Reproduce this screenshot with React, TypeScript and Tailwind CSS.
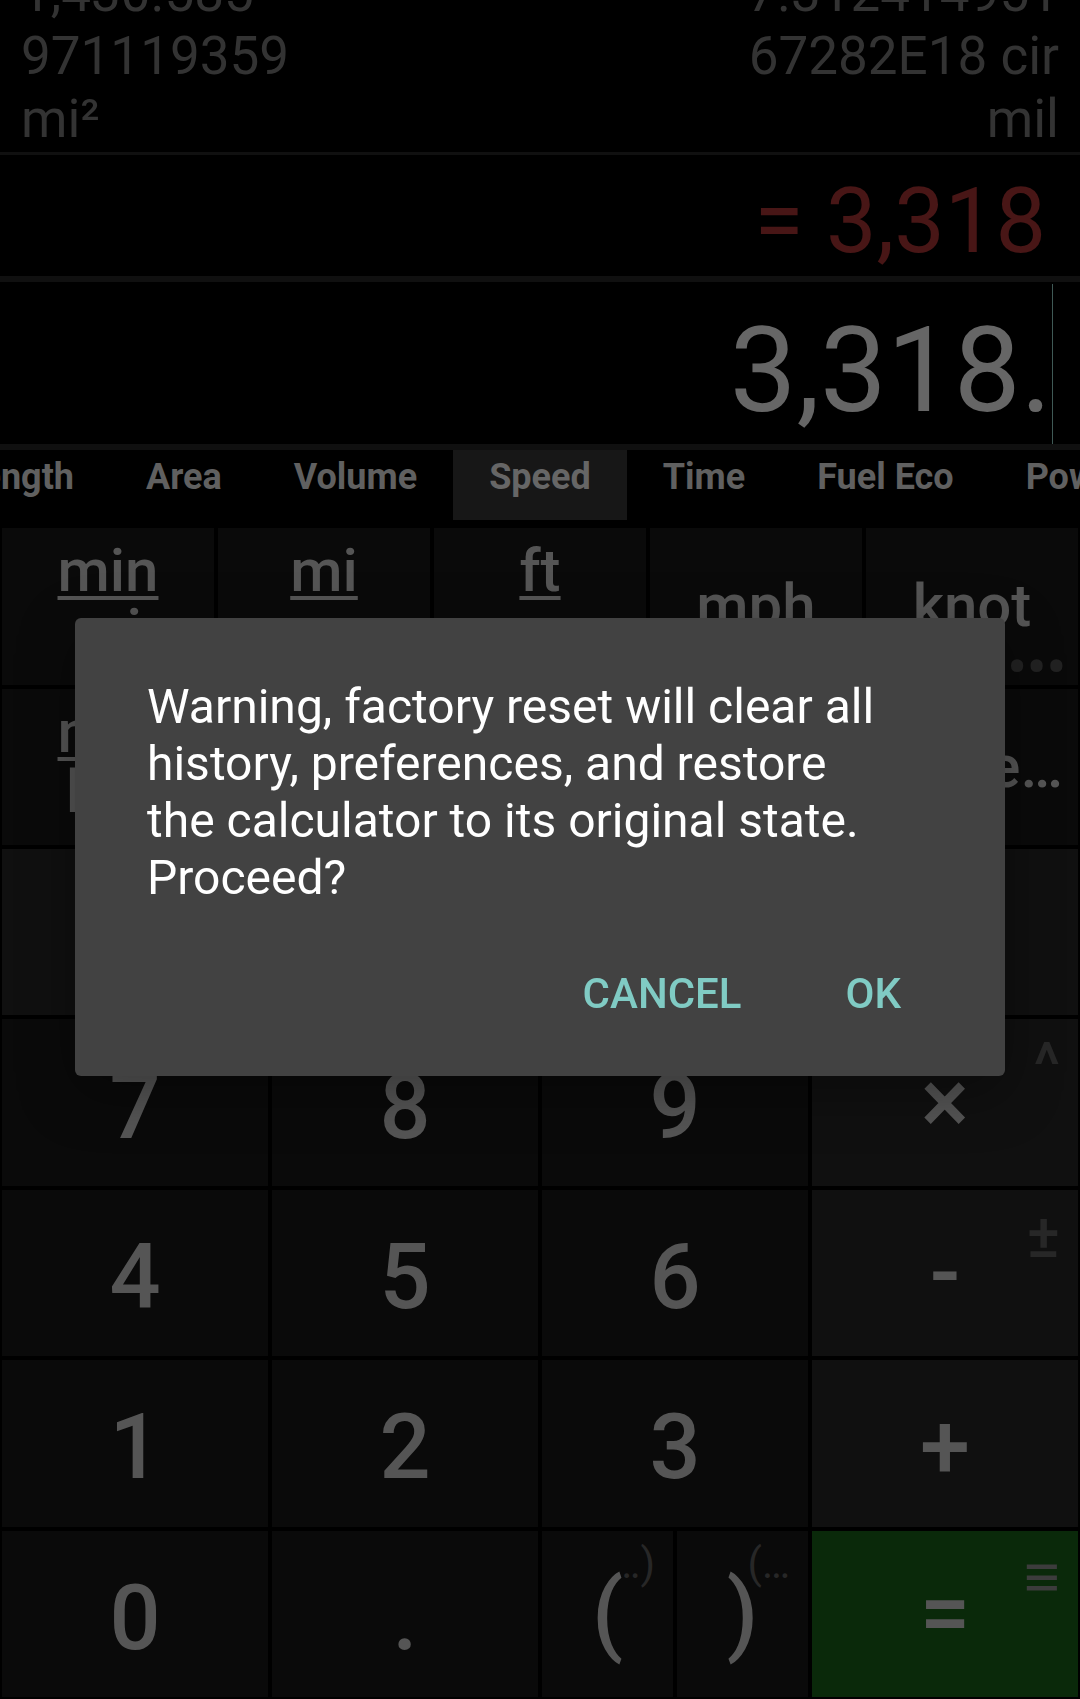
import type { ReactNode } from "react";

const tabs = ["Length", "Area", "Volume", "Speed", "Time", "Fuel Eco", "Power"];

type Unit = { name: string; top?: string; bottom?: string; more?: boolean };

const units: Unit[] = [
  { name: "minutes per mile", top: "min", bottom: "mi" },
  { name: "miles per second", top: "mi", bottom: "s" },
  { name: "feet per second", top: "ft", bottom: "s" },
  { name: "mph", bottom: "mph" },
  { name: "knot", bottom: "knot", more: true },
  { name: "minutes per kilometre", top: "min", bottom: "km" },
  { name: "kilometres per second" },
  { name: "metres per second" },
  { name: "kilometres per hour" },
  { name: "More units", bottom: "More…" },
];

function UnitKey({ unit }: { unit: Unit }) {
  return (
    <button
      type="button"
      aria-label={unit.name}
      className={
        "relative m-[2px] flex flex-col items-center justify-center bg-[#0a0a0a] text-[60px] leading-[60px] font-medium text-[#555555] " +
        (unit.top ? "pb-[10px]" : "")
      }
    >
      {unit.more && (
        <span className="absolute right-[12px] bottom-[8px] text-[56px] leading-[20px] text-[#222222]">•••</span>
      )}
      {unit.top && (
        <span className="underline decoration-4 underline-offset-[5px] [text-decoration-skip-ink:none]">{unit.top}</span>
      )}
      {unit.bottom && <span className="relative">{unit.bottom}</span>}
    </button>
  );
}

type KeyProps = {
  label?: string;
  name?: string;
  tone?: "digit" | "operator" | "equals";
  symbol?: boolean;
  hint?: ReactNode;
};

const tones = {
  digit: "bg-[#0a0a0a]",
  operator: "bg-[#101010]",
  equals: "bg-[#0a290a]",
};

function Key({ label, name, tone = "digit", symbol = false, hint }: KeyProps) {
  return (
    <button
      type="button"
      aria-label={name}
      className={
        "relative m-[2px] flex flex-1 items-center justify-center text-[90px] leading-[106px] font-medium text-[#555555] " +
        (symbol ? "pt-0 " : "pt-[10px] ") +
        tones[tone]
      }
    >
      {hint}
      {label && <span className="relative">{label}</span>}
    </button>
  );
}

function Hint({ children, bright = false }: { children: string; bright?: boolean }) {
  return (
    <span
      className={
        "absolute top-[14px] right-[18px] text-[62px] leading-[64px] " +
        (bright ? "text-[#3c3c3c]" : "text-[#272727]")
      }
    >
      {children}
    </span>
  );
}

function ParenHint({ children }: { children: string }) {
  return (
    <span className="absolute top-[8px] right-[18px] text-[42px] leading-[50px] font-normal text-[#272727]">
      {children}
    </span>
  );
}

export default function App() {
  return (
    <div className="flex h-screen flex-col overflow-hidden bg-black font-[Roboto,sans-serif]">
      <section
        aria-label="History"
        className="flex h-[155px] shrink-0 items-end justify-between overflow-hidden border-b-[3px] border-[#101010] px-[21px] pb-px text-[53px] leading-[63px] text-[#333333]"
      >
        <p>
          1,430.585
          <br />
          971119359
          <br />
          mi²
        </p>
        <p className="text-right">
          7.312414951
          <br />
          67282E18 cir
          <br />
          mil
        </p>
      </section>

      <output className="flex h-[127px] shrink-0 items-center justify-end border-b-[6px] border-[#101010] pt-[12px] pr-[34px] text-[90px] leading-[106px] text-[#481616]">
        = 3,318
      </output>

      <div className="flex h-[168px] shrink-0 border-b-[6px] border-[#101010] pt-[2px] pr-[27px]">
        <input
          aria-label="Expression"
          readOnly
          value="3,318."
          className="min-w-0 flex-1 bg-transparent pt-[14px] text-right text-[119px] leading-[140px] text-[#666666] outline-none"
        />
        <span className="w-px bg-[#3f5955]" />
      </div>

      <nav aria-label="Unit categories" className="flex h-[76px] shrink-0 justify-center overflow-hidden pl-[10px]">
        {tabs.map((tab) => (
          <button
            key={tab}
            type="button"
            className={
              "h-[70px] shrink-0 px-[36px] pb-[16px] text-[36px] leading-[42px] font-bold whitespace-nowrap " +
              (tab === "Speed" ? "bg-[#171717] text-[#666666]" : "text-[#606060]")
            }
          >
            {tab}
          </button>
        ))}
      </nav>

      <div className="grid h-[321px] shrink-0 grid-cols-5 grid-rows-2">
        {units.map((unit) => (
          <UnitKey key={unit.name} unit={unit} />
        ))}
      </div>

      <div className="grid min-h-0 flex-1 grid-cols-4 grid-rows-5">
        <Key tone="operator" name="Clear" />
        <Key tone="operator" name="Delete" />
        <Key tone="operator" name="Percent" />
        <Key tone="operator" name="Divide" />
        <Key label="7" />
        <Key label="8" />
        <Key label="9" />
        <Key label="×" tone="operator" symbol hint={<Hint>^</Hint>} />
        <Key label="4" />
        <Key label="5" />
        <Key label="6" />
        <Key label="-" tone="operator" symbol hint={<Hint>±</Hint>} />
        <Key label="1" />
        <Key label="2" />
        <Key label="3" />
        <Key label="+" tone="operator" />
        <Key label="0" />
        <Key label="." />
        <div className="flex">
          <Key label="(" symbol hint={<ParenHint>…)</ParenHint>} />
          <Key label=")" symbol hint={<ParenHint>(…</ParenHint>} />
        </div>
        <Key label="=" tone="equals" symbol hint={<Hint bright>≡</Hint>} />
      </div>

      <div className="fixed inset-0 flex items-center justify-center px-[75px] pb-[5px]">
        <div
          role="alertdialog"
          aria-modal="true"
          aria-describedby="reset-warning"
          className="w-full rounded-[6px] bg-[#424242] px-[72px] pt-[60px] pb-[32px] shadow-[0_16px_56px_rgba(0,0,0,0.35)]"
        >
          <p id="reset-warning" className="max-w-[740px] text-[48px] leading-[57px] text-white">
            Warning, factory reset will clear all history, preferences, and restore the calculator to its original
            state. Proceed?
          </p>
          <div className="mt-[38px] flex justify-end gap-[24px] text-[42px] leading-[50px] font-medium text-[#80cbc4]">
            <button type="button" className="h-[100px] px-[48px]">
              CANCEL
            </button>
            <button type="button" className="h-[100px] px-[32px]">
              OK
            </button>
          </div>
        </div>
      </div>
    </div>
  );
}
